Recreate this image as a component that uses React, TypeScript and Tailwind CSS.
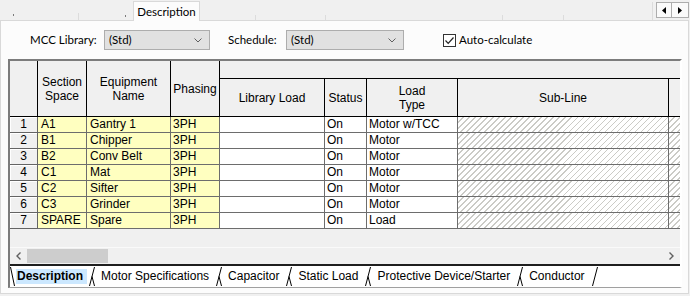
import type { ReactNode } from "react";

const ui = "font-['Lato','Noto_Sans',sans-serif] text-[11.5px]";

const rows = [
  ["1", "A1", "Gantry 1", "3PH", "", "On", "Motor w/TCC"],
  ["2", "B1", "Chipper", "3PH", "", "On", "Motor"],
  ["3", "B2", "Conv Belt", "3PH", "", "On", "Motor"],
  ["4", "C1", "Mat", "3PH", "", "On", "Motor"],
  ["5", "C2", "Sifter", "3PH", "", "On", "Motor"],
  ["6", "C3", "Grinder", "3PH", "", "On", "Motor"],
  ["7", "SPARE", "Spare", "3PH", "", "On", "Load"],
];

const hatch =
  "bg-[image:repeating-linear-gradient(135deg,#ffffff_0px,#ffffff_3.4px,#cbcbc6_3.4px,#cbcbc6_4.25px)]";

function Chevron() {
  return (
    <svg width="8" height="5" viewBox="0 0 8 5" className="shrink-0">
      <path d="M0.5 0.5 L4 4 L7.5 0.5" fill="none" stroke="#606060" strokeWidth="1" />
    </svg>
  );
}

function Select({ w }: { w: string }) {
  return (
    <div className={`${w} h-[20px] flex items-center justify-between pl-[4px] pr-[7px] bg-[#e1e1e1] border border-[#adadad]`}>
      <span>(Std)</span>
      <Chevron />
    </div>
  );
}

function HeadCell({ w, children, last }: { w: string; children?: ReactNode; last?: boolean }) {
  return (
    <div
      className={`${w} h-full shrink-0 flex items-center justify-center text-center leading-[14px] border-b border-black ${last ? "" : "border-r"}`}
    >
      {children}
    </div>
  );
}

function Sep({ kind }: { kind: "first" | "mid" | "last" }) {
  return (
    <svg width={kind === "first" ? 6 : 9} height="19" viewBox={kind === "first" ? "0 0 6 19" : "0 0 9 19"} className="shrink-0 self-start">
      {kind === "first" && <path d="M0.5 0 L4.5 19" stroke="#000" strokeWidth="1" />}
      {kind !== "first" && <path d="M7.5 0 L2.5 19" stroke="#000" strokeWidth="1" />}
      {kind === "mid" && <path d="M5 9.5 L7.5 19" stroke="#000" strokeWidth="1" />}
    </svg>
  );
}

const tabs = ["Motor Specifications", "Capacitor", "Static Load", "Protective Device/Starter", "Conductor"];

export default function App() {
  return (
    <div className="w-[690px] h-[296px] bg-[#f0f0f0] overflow-hidden text-black font-['Liberation_Sans',Arial,sans-serif] text-[12px]">
      {/* top tab strip */}
      <div className="relative h-[20px] flex">
        <span className="absolute left-[13px] top-[14px] w-px h-[2px] bg-[#7a7a7a]" />
        <span className="absolute left-[78px] top-[13px] w-px h-[7px] bg-[#dcdcdc]" />
        <span className="absolute left-[125px] top-[15px] w-px h-[2px] bg-[#7a7a7a]" />
        <span className="absolute left-[255px] top-[15px] w-px h-[5px] bg-[#dcdcdc]" />
        <span className="absolute left-[325px] top-[15px] w-px h-[5px] bg-[#dcdcdc]" />
        <span className="absolute left-[502px] top-[15px] w-px h-[5px] bg-[#dcdcdc]" />
        <span className="absolute left-[563px] top-[15px] w-px h-[5px] bg-[#dcdcdc]" />
        <span className="absolute left-[652px] top-[2px] w-px h-[18px] bg-[#dcdcdc]" />
        <div className={`${ui} relative z-10 ml-[133px] mt-[1px] h-[20px] w-[67px] flex items-center justify-center bg-[#fcfcfc] border border-b-0 border-[#d9d9d9]`}>
          Description
        </div>
        <div className="ml-auto mr-[1px] mt-[2px] h-[16px] flex border border-[#adadad] bg-[#fafafa]">
          <div className="w-[15px] flex items-center justify-center border-r border-[#adadad]">
            <svg width="4" height="7" viewBox="0 0 4 7"><path d="M4 0 L0 3.5 L4 7 Z" fill="#000" /></svg>
          </div>
          <div className="w-[16px] flex items-center justify-center">
            <svg width="4" height="7" viewBox="0 0 4 7"><path d="M0 0 L4 3.5 L0 7 Z" fill="#000" /></svg>
          </div>
        </div>
      </div>

      {/* panel */}
      <div className="w-[689px] h-[274px] bg-[#fcfcfc] border border-[#d9d9d9] pt-[9px]">
        <div className={`${ui} h-[20px] flex items-center pl-[29px]`}>
          <span className="w-[74px]">MCC Library:</span>
          <Select w="w-[106px]" />
          <span className="ml-[18px] w-[58px]">Schedule:</span>
          <Select w="w-[118px]" />
          <div className="ml-[39px] w-[13px] h-[13px] border border-[#333] bg-white flex items-center justify-center">
            <svg width="11" height="11" viewBox="0 0 11 11">
              <path d="M1.5 5.5 L4.2 8.3 L9.5 2.5" fill="none" stroke="#222" strokeWidth="1.2" />
            </svg>
          </div>
          <span className="ml-[3px]">Auto-calculate</span>
        </div>

        {/* grid */}
        <div className="mt-[9px] ml-[7px] w-[674px] flex flex-col border-l-2 border-t-2 border-r-2 border-b border-l-[#7c7c7c] border-t-[#7c7c7c] border-r-white border-b-[#a0a0a0]">
          {/* header */}
          <div className="h-[56px] flex bg-[#f0f0f0]">
            <HeadCell w="w-[28px]" />
            <HeadCell w="w-[49px]">Section<br />Space</HeadCell>
            <HeadCell w="w-[84px]">Equipment<br />Name</HeadCell>
            <HeadCell w="w-[49px]">Phasing</HeadCell>
            <div className="flex-1 flex flex-col">
              <div className="h-[18px] border-b border-black" />
              <div className="flex-1 flex">
                <HeadCell w="w-[105px]">Library Load</HeadCell>
                <HeadCell w="w-[42px]">Status</HeadCell>
                <HeadCell w="w-[91px]">Load<br />Type</HeadCell>
                <HeadCell w="w-[211px]">Sub-Line</HeadCell>
                <HeadCell w="flex-1" last />
              </div>
            </div>
          </div>

          {/* body rows */}
          {rows.map((r) => (
            <div key={r[0]} className="h-[16px] flex leading-[15px]">
              <div className="w-[28px] shrink-0 text-center bg-[#f0f0f0] border-r border-b border-[#646464] shadow-[inset_1px_1px_0_#ffffff]">
                {r[0]}
              </div>
              <div className="w-[49px] shrink-0 pl-[3px] bg-[#ffffc0] border-r border-b border-[#6d6d6d]">{r[1]}</div>
              <div className="w-[84px] shrink-0 pl-[3px] bg-[#ffffc0] border-r border-b border-[#6d6d6d]">{r[2]}</div>
              <div className="w-[49px] shrink-0 pl-[2px] bg-[#ffffc0] border-r border-b border-[#6d6d6d]">{r[3]}</div>
              <div className="w-[105px] shrink-0 bg-white border-r border-b border-[#6d6d6d]">{r[4]}</div>
              <div className="w-[42px] shrink-0 pl-[2px] bg-white border-r border-b border-[#6d6d6d]">{r[5]}</div>
              <div className="w-[91px] shrink-0 pl-[2px] bg-white border-r border-b border-[#6d6d6d]">{r[6]}</div>
              <div className={`w-[211px] shrink-0 ${hatch} border-r border-b border-[#6d6d6d]`} />
              <div className={`flex-1 ${hatch} border-b border-[#6d6d6d]`} />
            </div>
          ))}

          <div className="h-[18px] bg-[#f0f0f0]" />

          {/* horizontal scrollbar */}
          <div className="h-[17px] flex items-center bg-[#f0f0f0] border-t border-[#fafafa]">
            <div className="w-[17px] flex items-center justify-center">
              <svg width="5" height="8" viewBox="0 0 5 8"><path d="M4.5 0.5 L1 4 L4.5 7.5" fill="none" stroke="#606060" strokeWidth="1.4" /></svg>
            </div>
            <div className="w-[81px] h-[14px] bg-[#cdcdcd]" />
            <div className="flex-1" />
            <div className="w-[17px] flex items-center justify-center">
              <svg width="5" height="8" viewBox="0 0 5 8"><path d="M0.5 0.5 L4 4 L0.5 7.5" fill="none" stroke="#606060" strokeWidth="1.4" /></svg>
            </div>
          </div>

          {/* sheet tabs */}
          <div className="h-[23px] flex bg-white border-t-2 border-[#1e1e1e] pt-px">
            <Sep kind="first" />
            <div className="self-start mt-[2px] h-[15px] leading-[15px] pl-[1px] pr-[4px] bg-[#cce8ff] font-bold">Description</div>
            {tabs.map((t, i) => (
              <div key={t} className="flex">
                <Sep kind="mid" />
                <div className="self-start mt-[2px] h-[15px] leading-[15px] px-[5px]">{t}</div>
                {i === tabs.length - 1 && <Sep kind="last" />}
              </div>
            ))}
          </div>
        </div>
      </div>
    </div>
  );
}
